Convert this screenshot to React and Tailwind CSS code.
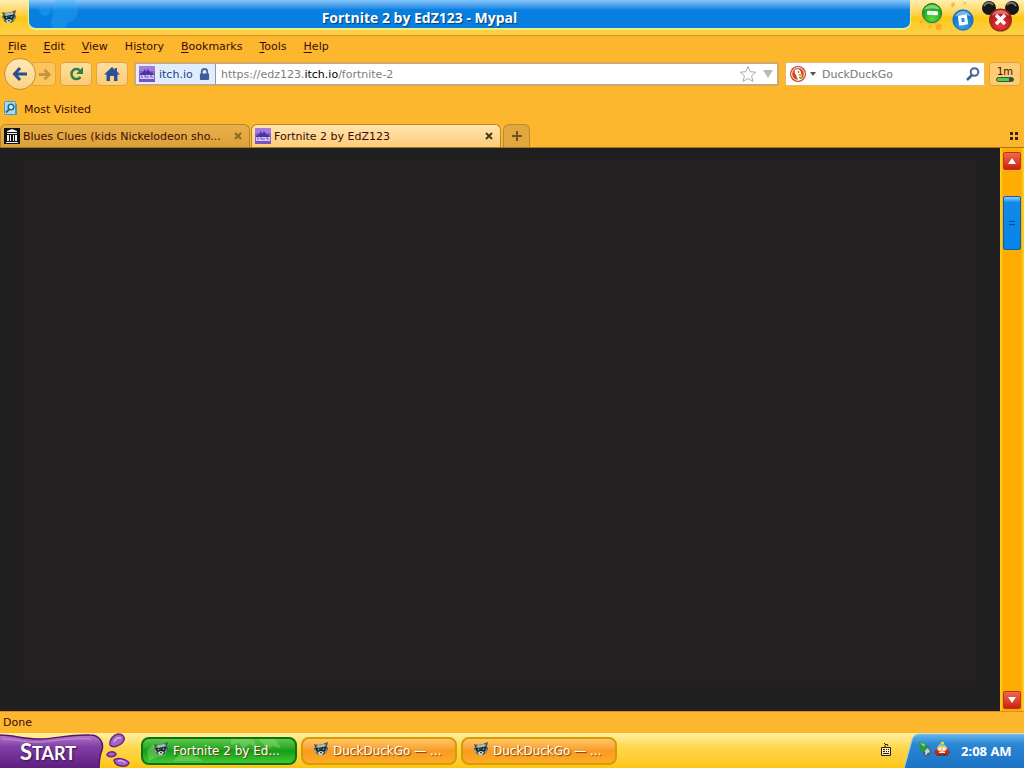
import React, { useState } from 'react';

const menus = [
  { key: 'F', rest: 'ile' },
  { key: 'E', rest: 'dit' },
  { key: 'V', rest: 'iew' },
  { before: 'Hi', key: 's', rest: 'tory' },
  { key: 'B', rest: 'ookmarks' },
  { key: 'T', rest: 'ools' },
  { key: 'H', rest: 'elp' },
];

const RaccoonIcon = ({ className }) => (
  <svg viewBox="0 0 16 16" className={className} aria-hidden="true">
    <path d="M1 3l4 1 5-1 5-2-1 4 1 3-2 4-3 2H6l-3-2-2-4 1-2z" fill="#45565c" />
    <path d="M3 5l3-1 5-1 2 1-2 2-3 0-3 1zM1 8l3 2-1 2zM14 7l-2 4 1 1z" fill="#a9babd" />
    <path d="M3 7l4 0 1 2 1-3 4 0-1 4-3 1H6L3 10z" fill="#162026" />
    <path d="M5 11l3-1 3 1-2 3H6z" fill="#c9d6d4" />
    <circle cx="5.500" cy="8.500" r="1" fill="#58b070" />
    <circle cx="10.500" cy="8" r="1" fill="#58b070" />
    <path d="M7 11h2l-1 2z" fill="#11191d" />
  </svg>
);

const ItchIcon = () => (
  <svg viewBox="0 0 16 16" className="size-4 shrink-0" aria-hidden="true">
    <rect width="16" height="16" fill="#8a62cf" />
    <path d="M0 0h16v5H0z" fill="#a47ddb" />
    <path d="M1 8l3-2 2-3 1 3 2-3 2 3 3 1 1 3H1z" fill="#4a35a5" />
    <path d="M1 9h14v4H1z" fill="#d9c6f2" />
    <path d="M2 10h1v2m2-2h2v2m2-2v2m2-2h2v2" stroke="#7050bd" fill="none" />
    <path d="M0 13h16v3H0z" fill="#7554c2" />
  </svg>
);

const ArchiveIcon = () => (
  <svg viewBox="0 0 16 16" className="size-4 shrink-0" aria-hidden="true">
    <rect width="16" height="16" fill="#111" />
    <path d="M8 1l5 2v1H3V3zM3 5h10v1H3zM3 7h2v6H3zM6 7h1v6H6zM9 7h1v6H9zM11 7h2v6h-2zM2 14h12v1H2z" fill="#f2f2f2" />
  </svg>
);

const BackIcon = () => (
  <svg viewBox="0 0 18 18" className="size-[18px]" aria-hidden="true">
    <path d="M9 3L3.500 9 9 15M4 9h12" fill="none" stroke="#2a4f8c" strokeWidth="3" />
  </svg>
);

const ForwardIcon = () => (
  <svg viewBox="0 0 16 16" className="size-[15px]" aria-hidden="true">
    <path d="M8 3l5 5-5 5M13 8H2" fill="none" stroke="#c39545" strokeWidth="3" />
  </svg>
);

const ReloadIcon = () => (
  <svg viewBox="0 0 16 16" className="size-4" aria-hidden="true">
    <path d="M12 4.500A5 5 0 1 0 12.500 11" fill="none" stroke="#2c8148" strokeWidth="2.500" />
    <path d="M15 1v7H8z" fill="#2c8148" />
  </svg>
);

const HomeIcon = () => (
  <svg viewBox="0 0 16 16" className="size-4" aria-hidden="true">
    <path d="M8 1L0 8.500h2.500V15H6v-5h4v5h3.500V8.500H16L13 5.600V2h-2v1.800z" fill="#2c5198" />
  </svg>
);

const LockIcon = () => (
  <svg viewBox="0 0 12 14" className="h-[13px] w-[11px]" aria-hidden="true">
    <path d="M3 7V4a3 3 0 0 1 6 0v3" fill="none" stroke="#48659c" strokeWidth="2" />
    <rect x="1" y="6" width="10" height="7" rx="1" fill="#3e5c98" />
  </svg>
);

const StarIcon = () => (
  <svg viewBox="0 0 18 18" className="size-[18px]" aria-hidden="true">
    <path d="M9 1.500l2.200 5.200 5.600.5-4.200 3.700 1.300 5.500L9 13.500l-4.900 2.900 1.300-5.500-4.200-3.700 5.600-.5z" fill="#fdfdfd" stroke="#a9abb2" />
  </svg>
);

const DuckIcon = () => (
  <svg viewBox="0 0 16 16" className="size-4" aria-hidden="true">
    <circle cx="8" cy="8" r="8" fill="#cf4525" />
    <circle cx="8" cy="8" r="6.300" fill="none" stroke="#fff" />
    <path d="M5 4c3-2 6 0 6 3v2l1 2-1 3-3 0-2-5c-1-2-2-3-1-5z" fill="#fff" />
    <path d="M8 8l5 0-3 3z" fill="#f3b21c" />
    <path d="M9 11l4 0-2 2-2-1z" fill="#54a845" />
    <circle cx="8.500" cy="6" r=".8" fill="#36322e" />
  </svg>
);

const MagnifierIcon = () => (
  <svg viewBox="0 0 14 14" className="size-[14px]" aria-hidden="true">
    <circle cx="8.500" cy="5" r="3.800" fill="none" stroke="#4a6896" strokeWidth="2" />
    <path d="M6 8l-5 5" stroke="#405f90" strokeWidth="2.500" />
  </svg>
);

const MostVisitedIcon = () => (
  <svg viewBox="0 0 16 16" className="size-4" aria-hidden="true">
    <path d="M3 3h10v11H3z" fill="#5296b5" />
    <rect x=".5" y=".5" width="11" height="13" rx="1" fill="#a6dcf0" stroke="#4b9bc0" />
    <circle cx="7" cy="6" r="2.800" fill="#d3f0f9" stroke="#28678b" strokeWidth="1.500" />
    <path d="M5 8.500l-3 3" stroke="#28678b" strokeWidth="2" />
  </svg>
);

// Minimize, restore and close, with the sparks and the mouse ears around them
const MinimizeIcon = () => (
  <svg viewBox="0 0 28 34" className="h-[34px] w-7" aria-hidden="true">
    <defs>
      <radialGradient id="green" cx=".5" cy=".8" r=".8">
        <stop offset="0" stopColor="#58dc45" />
        <stop offset="1" stopColor="#0b8a1b" />
      </radialGradient>
    </defs>
    <path d="M2 21l3-1 0 3-3 0zM9 27l3-2 2 1-1 2zM18 25l3-2 2 2 2 0-2 2 1 3-3-1-3 1 0-2z" fill="#f9aa22" />
    <circle cx="14" cy="14" r="10.500" fill="#a8b05a" opacity=".5" />
    <circle cx="14" cy="13" r="9.500" fill="url(#green)" stroke="#128023" />
    <path d="M6 10c2-7 14-7 16 0-4-2-12-2-16 0z" fill="#b9f29c" opacity=".65" />
    <rect x="9" y="11" width="11" height="4" rx="1" fill="#f6fff0" transform="rotate(4 14 13)" />
  </svg>
);

const RestoreIcon = () => (
  <svg viewBox="0 0 26 34" className="h-[34px] w-[26px]" aria-hidden="true">
    <defs>
      <radialGradient id="blue" cx=".5" cy=".8" r=".8">
        <stop offset="0" stopColor="#37a5f2" />
        <stop offset="1" stopColor="#065db5" />
      </radialGradient>
    </defs>
    <path d="M1 4l3-2 1 3-3 3zM13 2l3 0-1 3z" fill="#f7b63d" />
    <circle cx="13" cy="20" r="11" fill="#75a9bf" opacity=".6" />
    <circle cx="13" cy="20" r="10" fill="url(#blue)" stroke="#1470bd" />
    <path d="M5 17c2-8 14-8 16 0-4-3-12-3-16 0z" fill="#9dd8fb" opacity=".7" />
    <path d="M9.500 17l6-1 1 7-6 1z" fill="#2f8cdf" stroke="#fff" strokeWidth="3" />
  </svg>
);

const CloseIcon = () => (
  <svg viewBox="0 0 40 34" className="h-[34px] w-10" aria-hidden="true">
    <defs>
      <radialGradient id="red" cx=".5" cy=".8" r=".8">
        <stop offset="0" stopColor="#ee3c37" />
        <stop offset="1" stopColor="#a40916" />
      </radialGradient>
    </defs>
    <circle cx="9" cy="8" r="7" fill="#171717" />
    <circle cx="32" cy="8" r="7" fill="#171717" />
    <path d="M4 6c2-4 7-4 9-1M27 5c2-3 7-3 9 1" stroke="#777" strokeWidth="2" fill="none" />
    <circle cx="20.500" cy="20" r="11.500" fill="#942f1c" />
    <circle cx="20.500" cy="19.500" r="10.500" fill="url(#red)" />
    <path d="M12 16c2-8 15-8 17 0-4-3-13-3-17 0z" fill="#f5aaa2" opacity=".6" />
    <path d="M16 15l9 9M25 15l-9 9" stroke="#fff" strokeWidth="3.500" />
  </svg>
);

const Splat = () => (
  <svg viewBox="0 0 34 35" className="h-[35px] w-[34px] shrink-0" aria-hidden="true">
    <g fill="#a066c4" stroke="#6b2489" strokeWidth="1.500">
      <path d="M6 12c-1-5 3-10 8-11 5 0 7 3 6 6-2 5-11 9-14 5z" />
      <path d="M3 22c1-4 7-4 9-1-1 3-7 4-9 1z" />
      <path d="M10 27c3-3 13-1 15 3-2 5-14 4-15-3z" />
    </g>
    <path d="M10 9c1-3 4-5 7-4M14 28c3-1 6 0 7 2" stroke="#d7b1e4" strokeWidth="1.500" fill="none" />
  </svg>
);

const TrayDiscIcon = () => (
  <svg viewBox="0 0 16 16" className="size-4" aria-hidden="true">
    <path d="M5 7l6-2 3 5-1 4-5 1-3-5z" fill="#4a6070" />
    <path d="M7 9l4-2 2 4-4 2z" fill="#c0d5cf" />
    <path d="M2 1l7 2 1 5-4 3-4-3 1-1z" fill="#269b39" />
    <path d="M3 2l5 1-1 3z" fill="#86dc70" />
    <path d="M8 13l2 0" stroke="#eee" />
  </svg>
);

const CartmanIcon = () => (
  <svg viewBox="0 0 18 16" className="h-4 w-[18px]" aria-hidden="true">
    <path d="M1 12c1-4 3-4 6-5h5c3 1 4 2 5 5l-3 2H4z" fill="#c92419" />
    <path d="M3 13l12 0-1 2H4z" fill="#693a29" />
    <ellipse cx="9" cy="7.500" rx="5" ry="3.500" fill="#f4c69c" />
    <path d="M5 6c0-5 7-5 8 0z" fill="#7ec0b0" />
    <path d="M8 1h3v2H8zM5 5h8v1H5z" fill="#f1d33c" />
    <path d="M6 7h2v2H6zM10 7h2v2h-2zM6 11h6v1H6z" fill="#fff" />
  </svg>
);

const KeyboardIcon = () => (
  <svg viewBox="0 0 12 14" className="h-[14px] w-3" aria-hidden="true">
    <path d="M4 1l2 2 1-1 1 2M5 3v3" stroke="#2a2108" fill="none" />
    <path d="M1.500 5.500h9v8h-9z" fill="#f7edc0" stroke="#2a2108" />
    <path d="M3 7h2v1H3zM6 7h1v1H6zM8 7h1v1H8zM3 9h2v1H3zM6 9h1v1H6zM8 9h1v1H8zM3 11h6v1H3z" fill="#2a2108" />
  </svg>
);

const TitleBar = () => (
  <header className="flex h-9 shrink-0 items-start border-b border-[#d79220] bg-linear-to-b from-[#ffefb0] via-[#ffc90c] to-[#fcd04a]">
    <div className="flex h-[34px] w-7 shrink-0 items-center pl-[1px]">
      <RaccoonIcon className="size-4" />
    </div>
    <div className="relative flex h-[30px] min-w-0 flex-1 items-center justify-center overflow-hidden rounded-b-lg border-x border-b-2 border-[#e8f28c] bg-linear-to-b from-[#83c8fa] via-[#0780e2] via-35% to-[#087ee0] pt-2 pr-[100px]">
      {/* Bubbles at the left end of the bar */}
      <svg viewBox="0 0 60 30" className="absolute top-0 left-0 h-[30px] w-[60px]" aria-hidden="true">
        <g fill="#36b4f4" opacity=".3">
          <circle cx="36" cy="10" r="13" />
          <circle cx="16" cy="10" r="6" />
          <circle cx="30" cy="22" r="8" />
        </g>
      </svg>
      <h1 className="truncate font-['Open_Sans',sans-serif] text-[14px] leading-5 font-bold text-white [text-shadow:1px_1px_1px_#063b73]">
        Fortnite 2 by EdZ123 - Mypal
      </h1>
    </div>
    <div className="flex shrink-0 pr-1 pl-[7px]">
      <button aria-label="Minimize"><MinimizeIcon /></button>
      <button aria-label="Restore" className="ml-1"><RestoreIcon /></button>
      <button aria-label="Close" className="ml-1"><CloseIcon /></button>
    </div>
  </header>
);

const MenuBar = () => (
  <nav className="flex h-[22px] shrink-0 items-center gap-[17px] px-2">
    {menus.map((menu) => (
      <button key={menu.rest}>
        {menu.before}<span className="underline underline-offset-2">{menu.key}</span>{menu.rest}
      </button>
    ))}
  </nav>
);

const ToolButton = ({ label, children }) => (
  <button
    aria-label={label}
    className="flex h-6 w-8 shrink-0 items-center justify-center rounded-sm border border-[#dfa342] bg-linear-to-b from-[#ffdf9c] to-[#fccb76]"
  >
    {children}
  </button>
);

const NavBar = () => {
  const [search, setSearch] = useState('');

  return (
    <div className="flex h-8 shrink-0 items-center pr-[3px] pl-1">
      <div className="flex items-center">
        <button aria-label="Back" className="z-10 flex size-8 items-center justify-center rounded-full border border-[#c98e31] bg-linear-to-b from-[#ffe9b6] to-[#fbd184]">
          <BackIcon />
        </button>
        <button aria-label="Forward" className="-ml-1 flex h-6 w-6 items-center justify-center rounded-r-sm border border-[#e3a63e] bg-[#fdc55d]">
          <ForwardIcon />
        </button>
      </div>
      <div className="ml-1 flex gap-1">
        <ToolButton label="Reload"><ReloadIcon /></ToolButton>
        <ToolButton label="Home"><HomeIcon /></ToolButton>
      </div>

      {/* Address field */}
      <div className="ml-[6px] flex h-6 min-w-0 flex-1 items-center rounded-xs border-2 border-[#cfa86b] bg-white">
        <button className="flex h-full w-20 shrink-0 items-center gap-1 border-r border-[#8c97ad] bg-[#dfedfc] pl-[3px] text-[#1c4386]">
          <ItchIcon />
          <span className="flex-1 pt-px text-left">itch.io</span>
          <span className="pr-[5px]"><LockIcon /></span>
        </button>
        <div className="min-w-0 flex-1 truncate pt-[2px] pl-[5px] text-[#7d7d7d]" role="textbox" aria-label="Address" tabIndex={0}>
          https://edz123.<span className="text-black">itch.io</span>/fortnite-2
        </div>
        <button aria-label="Bookmark this page"><StarIcon /></button>
        <button aria-label="Show history" className="mr-1 ml-[6px]">
          <svg viewBox="0 0 10 8" className="h-2 w-[10px]" aria-hidden="true">
            <path d="M0 0h10L5 8z" fill="#b9babd" />
          </svg>
        </button>
      </div>

      {/* Search field */}
      <form className="ml-[6px] flex h-6 w-[200px] shrink-0 items-center rounded-xs border border-[#e6ba6c] bg-white px-1" onSubmit={(e) => e.preventDefault()}>
        <button type="button" aria-label="Choose search engine" className="flex shrink-0 items-center gap-1">
          <DuckIcon />
          <svg viewBox="0 0 6 4" className="h-1 w-[6px]" aria-hidden="true">
            <path d="M0 0h6L3 4z" fill="#555" />
          </svg>
        </button>
        <input
          type="text"
          aria-label="Search"
          placeholder="DuckDuckGo"
          value={search}
          onChange={(e) => setSearch(e.target.value)}
          className="ml-[6px] min-w-0 flex-1 pt-[2px] outline-none placeholder:text-[#777]"
        />
        <button aria-label="Search the web"><MagnifierIcon /></button>
      </form>
      <button className="ml-1 flex h-6 w-8 shrink-0 flex-col items-center justify-center rounded-sm border border-[#dfa342] bg-[#fdcc75] text-[10px] leading-[11px]">
        1m
        <span className="flex h-[5px] w-[18px] overflow-hidden rounded-full border border-[#2c6134] bg-[#384b40]">
          <span className="w-3 bg-[#4dcc59]" />
        </span>
      </button>
    </div>
  );
};

const TabStrip = () => (
  <div className="flex h-6 shrink-0 items-end border-b border-[#a9721c]" role="tablist">
    <div className="flex h-[23px] w-[250px] items-center gap-[3px] rounded-t-md border border-b-0 border-[#b78432] bg-linear-to-b from-[#e7b04b] to-[#dca038] pr-[7px] pl-[3px]">
      <ArchiveIcon />
      <button role="tab" aria-selected="false" className="min-w-0 flex-1 truncate pt-[2px] text-left">
        Blues Clues (kids Nickelodeon sho...
      </button>
      <button aria-label="Close Blues Clues">
        <svg viewBox="0 0 8 8" className="size-2" aria-hidden="true">
          <path d="M1 1l6 6M7 1L1 7" stroke="#8c6826" strokeWidth="2" />
        </svg>
      </button>
    </div>
    <div className="ml-px flex h-[23px] w-[250px] items-center gap-[3px] rounded-t-md border border-b-0 border-[#b78432] bg-linear-to-b from-[#ffe5ae] to-[#fdcc78] pr-[7px] pl-[3px]">
      <ItchIcon />
      <button role="tab" aria-selected="true" className="min-w-0 flex-1 truncate pt-[2px] text-left">
        Fortnite 2 by EdZ123
      </button>
      <button aria-label="Close Fortnite 2">
        <svg viewBox="0 0 8 8" className="size-2" aria-hidden="true">
          <path d="M1 1l6 6M7 1L1 7" stroke="#4b3816" strokeWidth="2" />
        </svg>
      </button>
    </div>
    <button aria-label="Open a new tab" className="ml-[2px] flex h-[23px] w-[27px] items-center justify-center rounded-t-md border border-b-0 border-[#bf8933] bg-[#e2a840]">
      <svg viewBox="0 0 10 10" className="size-[10px]" aria-hidden="true">
        <path d="M5 0v10M0 5h10" stroke="#705326" strokeWidth="2" />
      </svg>
    </button>
    <button aria-label="Tab groups" className="mr-[6px] mb-[7px] ml-auto">
      <svg viewBox="0 0 8 8" className="size-2" aria-hidden="true">
        <path d="M0 0h3v3H0zM5 0h3v3H5zM0 5h3v3H0zM5 5h3v3H5z" fill="#3b2707" />
      </svg>
    </button>
  </div>
);

const ScrollArrow = ({ label, path }) => (
  <button aria-label={label} className="flex h-[18px] w-[18px] shrink-0 items-center justify-center rounded-xs border border-[#bd3419] bg-linear-to-b from-[#f0674a] to-[#c91f0c]">
    <svg viewBox="0 0 8 6" className="h-[6px] w-2" aria-hidden="true">
      <path d={path} fill="#fff" />
    </svg>
  </button>
);

const ScrollBar = () => (
  <div className="flex w-6 shrink-0 flex-col items-center border-x-2 border-[#fbcb23] bg-[#ffac05] pt-1 pb-[2px]">
    <ScrollArrow label="Scroll up" path="M4 0l4 6H0z" />
    <div className="mt-[26px] flex h-[54px] w-[18px] flex-col items-center justify-center gap-[2px] rounded-xs border border-[#0762ad] bg-linear-to-b from-[#8bd0ff] via-[#0d8aea] via-10% to-[#0784e8]">
      <span className="h-px w-[6px] bg-[#064d8c]" />
      <span className="h-px w-[6px] bg-[#064d8c]" />
    </div>
    <div className="flex-1" />
    <ScrollArrow label="Scroll down" path="M0 0h8L4 6z" />
  </div>
);

const TaskButton = ({ active, children }) => (
  <button
    className={`relative flex h-7 w-[156px] items-center gap-1 overflow-hidden rounded-lg border-2 pr-2 pl-[10px] text-[12px] font-medium text-white [text-shadow:1px_1px_1px_#704000] ${
      active
        ? 'border-[#087512] bg-linear-to-b from-[#5bc84b] via-[#129d19] to-[#41c935]'
        : 'border-[#d99a08] bg-linear-to-b from-[#ffc765] via-[#f99a23] to-[#fcad25]'
    }`}
  >
    {active && (
      <svg viewBox="0 0 152 24" className="absolute inset-0 size-full" aria-hidden="true">
        <path d="M4 12l8-8 4 8 8 4-10 2-8 4zM30 22l8-8 14 2 8 6zM88 0h22l4 8-8-3-6 5-4-6-8 2zM116 0h16l6 9-9-2-5 5-3-6z" fill="#a5e885" opacity=".35" />
      </svg>
    )}
    <RaccoonIcon className="relative mb-[3px] size-4 shrink-0" />
    <span className="relative truncate">{children}</span>
  </button>
);

const TaskBar = () => (
  <footer className="flex h-[35px] shrink-0 items-center overflow-hidden bg-linear-to-b from-[#fff0a0] via-[#ffd84d] via-40% to-[#fdc50b]">
    <button className="relative h-[35px] w-[104px] shrink-0">
      <svg viewBox="0 0 104 35" className="absolute inset-0 size-full" aria-hidden="true">
        <defs>
          <linearGradient id="slime" x2="0" y2="1">
            <stop offset="0" stopColor="#b37ac9" />
            <stop offset=".35" stopColor="#813fa5" />
            <stop offset="1" stopColor="#5c1d7e" />
          </linearGradient>
        </defs>
        <path d="M-1 2C12 2 25 6 40 6S70 1 90 2c10 0 14 8 12 15-3 7-3 12-3 19H-1z" fill="url(#slime)" stroke="#541472" strokeWidth="1.500" />
        <path d="M2 6c14 0 24 4 40 3 15-2 35-5 49-3" fill="none" stroke="#c79bd7" strokeWidth="1.500" opacity=".6" />
      </svg>
      <span className="relative block pt-1 pr-2 font-['Lato',sans-serif] text-[18px] leading-7 font-bold text-white [text-shadow:1px_1px_2px_#34104a]">
        <span className="text-[22px]">S</span>TART
      </span>
    </button>
    <Splat />
    <div className="ml-[3px] flex gap-1">
      <TaskButton active>Fortnite 2 by Ed...</TaskButton>
      <TaskButton>DuckDuckGo — ...</TaskButton>
      <TaskButton>DuckDuckGo — ...</TaskButton>
    </div>
    <button aria-label="Input language" className="mr-3 mb-1 ml-auto"><KeyboardIcon /></button>
    <div className="relative flex h-[35px] w-[120px] shrink-0 items-center pl-[13px]">
      <svg viewBox="0 0 120 35" preserveAspectRatio="none" className="absolute inset-0 size-full" aria-hidden="true">
        <defs>
          <linearGradient id="tray" x2="0" y2="1">
            <stop offset="0" stopColor="#65b7ee" />
            <stop offset=".3" stopColor="#2b86d3" />
            <stop offset="1" stopColor="#1a72c4" />
          </linearGradient>
        </defs>
        <path d="M0 36L8 7c1-4 4-6 8-6h105v35z" fill="url(#tray)" stroke="#94cce9" />
      </svg>
      <div className="relative flex items-center">
        <span className="mb-1"><TrayDiscIcon /></span>
        <span className="mb-1"><CartmanIcon /></span>
        <time className="ml-[10px] font-['Open_Sans',sans-serif] text-[13px] font-bold whitespace-nowrap text-white">2:08 AM</time>
      </div>
    </div>
  </footer>
);

const App = () => {
  return (
    <div className="flex h-screen flex-col overflow-hidden bg-[#fcb72f] font-['DejaVu_Sans',Verdana,sans-serif] text-[11px] leading-4 text-[#3a0c05]">
      <TitleBar />
      <MenuBar />
      <NavBar />

      {/* Bookmarks toolbar */}
      <div className="flex h-[34px] shrink-0 items-center px-1 pt-1">
        <button className="flex items-center gap-1">
          <MostVisitedIcon />
          <span className="pt-px">Most Visited</span>
        </button>
      </div>

      <TabStrip />

      <main className="flex min-h-0 flex-1">
        <div className="flex-1 bg-[#1e1f1e] px-6 pt-3 pb-6">
          <div className="h-full bg-[#242021]" />
        </div>
        <ScrollBar />
      </main>

      <div className="flex h-[22px] shrink-0 items-center border-t border-[#e38c2d] px-[3px]">Done</div>
      <TaskBar />
    </div>
  );
};

export default App;
